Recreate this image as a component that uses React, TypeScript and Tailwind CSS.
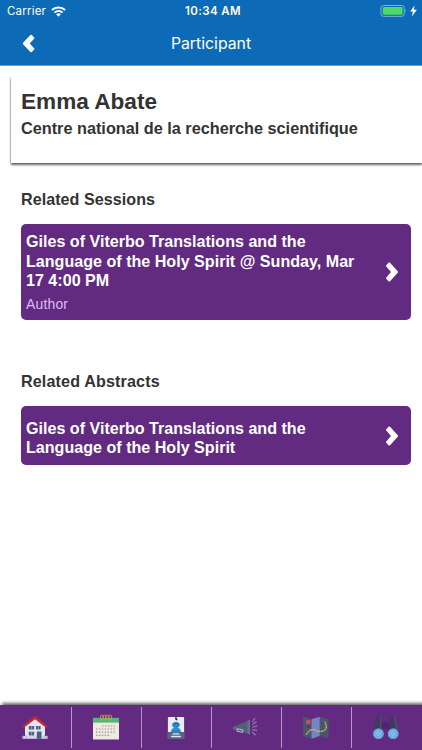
import React from "react";

const HELV = "font-['Liberation_Sans',Arial,sans-serif]";
const UI = "font-['Inter',sans-serif]";

function WifiIcon() {
  return (
    <svg className="ml-[5px] h-[11px] w-[15px]" viewBox="0 0 15 11" fill="none" stroke="#fff">
      <path d="M.9 4.1C4.7.5 10.3.5 14.1 4.1" strokeWidth="2" />
      <path d="M3.4 6.6C5.8 4.4 9.2 4.4 11.6 6.6" strokeWidth="1.9" />
      <path d="M7.5 10.8L5.1 8.3C6.6 7 8.4 7 9.9 8.3Z" fill="#fff" stroke="none" />
    </svg>
  );
}

function BatteryIcon() {
  return (
    <svg className="h-[13px] w-[38px]" viewBox="0 0 38 13">
      <rect x="1" y=".5" width="23.2" height="10.8" rx="2.3" fill="none" stroke="#7fb3dc" />
      <rect x="2.8" y="2.1" width="19.8" height="7.6" rx="1" fill="#4cdb63" />
      <path d="M25.5 4.1q1.6 1.8 0 3.6z" fill="#7fb3dc" />
      <path d="M34.6 .4L30.2 6.6h2.7l-1 4.8 5-6.6h-3z" fill="#fff" />
    </svg>
  );
}

function Chevron({ left = false }: { left?: boolean }) {
  return (
    <svg className="h-[22px] w-[14px] shrink-0" viewBox="0 0 14 22" fill="#fff" stroke="#fff" strokeWidth="2" strokeLinejoin="round">
      <path
        d={
          left
            ? "M2.8 10.5L10.1 2.8L12.4 5.1L7.3 10.5L12.4 15.9L10.1 18.2Z"
            : "M12 11L4.3 2.5L2 4.9L7.4 11L2 17.1L4.3 19.5Z"
        }
      />
    </svg>
  );
}

function HouseIcon() {
  return (
    <svg className="h-7 w-7" viewBox="0 0 28 28">
      <path d="M4 12L14 4l10 8v13H4z" fill="#e6e5ef" />
      <path d="M1.4 23h25.2v2.8H1.4z" fill="#d9d4ea" />
      <path d="M1.2 13.4L14 2.8l12.8 10.6-1.7 1.4L14 6.3 2.9 14.8z" fill="#c5272f" />
      <path d="M7.8 13h5.4v3.4H7.8zM15 13h4.6v3.4H15zM7.8 18.8h5.4v3.7H7.8z" fill="#4c6286" />
      <path d="M15.8 18.5h4.7v7.3h-4.7z" fill="#48607d" />
      <path d="M10.5 13v9.5M17.3 13v3.4" stroke="#bdc6df" strokeWidth=".5" />
      <path d="M2.5 22v3.5M4.8 22v3.5M23.5 22v3.5M25.7 22v3.5" stroke="#9184ba" strokeWidth=".5" />
    </svg>
  );
}

function CalendarIcon() {
  return (
    <svg className="h-7 w-7" viewBox="0 0 28 28">
      <path d="M1 7h26v19.5H1z" fill="#ece9df" />
      <path d="M1 4.8h26v4.8H1z" fill="#56b578" />
      <g fill="none" stroke="#c8a34d" strokeWidth=".9">
        <ellipse cx="9.8" cy="4.4" rx="1.4" ry="2.4" />
        <ellipse cx="12.6" cy="4.4" rx="1.4" ry="2.4" />
        <ellipse cx="15.4" cy="4.4" rx="1.4" ry="2.4" />
        <ellipse cx="18.2" cy="4.4" rx="1.4" ry="2.4" />
      </g>
      <g stroke="#98978f" strokeWidth="1.2" strokeDasharray="1.4 1.5">
        <path d="M10 13h14M4 16h20M4 19.2h20M4 22.4h14" />
      </g>
    </svg>
  );
}

function BadgeIcon() {
  return (
    <svg className="h-7 w-7" viewBox="0 0 28 28">
      <rect x="5.9" y="4" width="16.2" height="22" rx=".8" fill="#e8edf4" />
      <path d="M5.9 19h16.2v7H5.9z" fill="#526480" />
      <path d="M13 4.2h1.8v1.4l1 1.1-1 .9-1.6-1.2z" fill="#34364f" />
      <path d="M9 19.2c0-3 1.7-4 3.4-4.4-3.3-1.2-3-5.6 1.6-5.6s4.9 4.4 1.6 5.6c1.7.4 3.4 1.4 3.4 4.4z" fill="#258fce" />
      <path d="M10.7 10.4c1.5-1.6 5.1-1.6 6.6 0v1.4h-6.6z" fill="#2778b0" />
      <path d="M10.8 20.9h6.4M9 23.7h10" stroke="#e5e7ed" strokeWidth="1.2" />
      <path d="M9 22h10" stroke="#b4bdcb" strokeWidth=".6" />
    </svg>
  );
}

function MegaphoneIcon() {
  return (
    <svg className="h-7 w-7" viewBox="0 0 28 28">
      <path d="M1 14l3-1v4l-3-.7z" fill="#786388" />
      <path d="M3.4 13L17 7.2v14L3.4 17.3z" fill="#506079" />
      <path d="M15.5 7.8L18 7v14.4l-2.5-.6z" fill="#65718d" />
      <path d="M5.2 15.7l6 1.3-.6 2.4-5.7-1.3z" fill="none" stroke="#c2b9d0" strokeWidth="1" />
      <g fill="none" stroke="#a78fbf" strokeWidth="1">
        <path d="M20 8.8l1.5-1.2v-1l2-1M20.3 11.5l1.8-1v-1l2.5-.5M20.5 14h1.8l1-1h2M20.3 16.4l1.8 1 1-.7 2 1M20 18.8l1.7 1.2v1l2.3 1" />
      </g>
    </svg>
  );
}

function MapIcon() {
  return (
    <svg className="h-7 w-7" viewBox="0 0 28 28">
      <path d="M1.2 3.4l8.3 2.8v19.6l-8.3-2.9zM17.7 3.7l8.8 2.2v19.5l-8.8-2.3z" fill="#4a566f" />
      <path d="M9.5 6.2l8.2-2.5v19.4l-8.2 2.7z" fill="#7587c2" />
      <path d="M6.4 13.2v.2" stroke="#263146" strokeWidth="1.8" strokeLinecap="round" />
      <circle cx="6.3" cy="8.9" r="2.3" fill="#c84f58" />
      <path d="M6.3 10.9v1.8" stroke="#b8424d" />
      <path d="M4.2 21.8l1.3-2.2L8 17.4l3-1 3 1.2 3 .8 3-.1 3-1.3 1.3-2.2-.3-3-1-3" fill="none" stroke="#d6bd4c" strokeWidth="1.2" strokeDasharray="2.4 .5" />
    </svg>
  );
}

function BinocularsIcon() {
  return (
    <svg className="h-7 w-7" viewBox="0 0 28 28">
      <path d="M4.2 4.5q2.8-2 5.4 0v7l2 8H1.5zM18.4 4.5q2.8-2 5.4 0l2.7 15H16.4l2-8z" fill="#3e3b5e" />
      <path d="M9.5 9.4h9v6.4h-9z" fill="#4b286b" />
      <path d="M7.8 4.2h1.8v12l-1.8 1zM22 3.8h1.8l2.5 14-2.8-1z" fill="#4e4b6e" />
      <circle cx="6.4" cy="20.7" r="5.3" fill="#73b0e7" />
      <circle cx="21.2" cy="20.7" r="5.3" fill="#73b0e7" />
      <circle cx="6.4" cy="20.7" r="4.9" fill="none" stroke="#5c98cf" strokeWidth=".7" />
      <circle cx="21.2" cy="20.7" r="4.9" fill="none" stroke="#5c98cf" strokeWidth=".7" />
      <path d="M3.8 21l3.2-3M5.7 22.7l3-3M18.5 21l3.2-3M20.4 22.7l3-3" stroke="#a0cdf4" strokeWidth="1" />
    </svg>
  );
}

const tabs = [HouseIcon, CalendarIcon, BadgeIcon, MegaphoneIcon, MapIcon, BinocularsIcon];

export default function App() {
  return (
    <div className={`flex h-[750px] w-[422px] flex-col overflow-hidden bg-white text-[#333] ${HELV}`}>
      <header className={`h-[66px] shrink-0 border-b border-[#66a0d2] bg-[#0c6ab7] text-white ${UI}`}>
        <div className="grid h-[22px] grid-cols-3 items-center">
          <div className="flex items-center pl-[7px] pt-px text-[11.5px] tracking-[0.2px]">
            <span>Carrier</span>
            <WifiIcon />
          </div>
          <div className="whitespace-nowrap pl-[4px] pt-px text-center text-[11.5px] font-semibold tracking-[0.4px]">10:34 AM</div>
          <div className="flex justify-end pr-[4px]">
            <BatteryIcon />
          </div>
        </div>
        <div className="grid h-[43px] grid-cols-[60px_1fr_60px] items-center">
          <button className="pl-[21px]" aria-label="Back">
            <Chevron left />
          </button>
          <h1 className="text-center text-[15.8px] font-normal">Participant</h1>
        </div>
      </header>

      <main className="flex-1">
        <section className="ml-[11px] mt-[11px] h-[86px] pl-[10px] pt-[12px] shadow-[0_2px_2px_rgba(0,0,0,0.6),-1px_0_1px_rgba(0,0,0,0.1)]">
          <h2 className="text-[22.6px] font-bold leading-[26px]">Emma Abate</h2>
          <p className="text-[16.25px] font-bold leading-[26px]">Centre national de la recherche scientifique</p>
        </section>

        <section className="ml-[21px] mr-[11px] mt-[26px]">
          <h3 className="text-[16.1px] font-bold leading-5 tracking-[0.05px]">Related Sessions</h3>
          <div className="mt-[15px] flex h-24 items-center justify-between rounded-[5px] bg-[#622a80] pl-[5px] pr-[12px] text-white">
            <div className="w-[340px] pt-[2px]">
              <p className="text-[16.1px] font-bold leading-[19.5px]">
                Giles of Viterbo Translations and the Language of the Holy Spirit @ Sunday, Mar 17 4:00 PM
              </p>
              <p className="mt-[3px] text-[14px] leading-5 tracking-[0.15px] text-[#dfbdf0]">Author</p>
            </div>
            <Chevron />
          </div>
        </section>

        <section className="ml-[21px] mr-[11px] mt-[51px]">
          <h3 className="text-[16.1px] font-bold leading-5 tracking-[0.15px]">Related Abstracts</h3>
          <div className="mt-[15px] flex h-[59px] items-center justify-between rounded-[5px] bg-[#622a80] pl-[5px] pr-[12px] text-white">
            <p className="w-[340px] pt-[5px] text-[16.1px] font-bold leading-[19.5px]">
              Giles of Viterbo Translations and the Language of the Holy Spirit
            </p>
            <Chevron />
          </div>
        </section>
      </main>

      <nav className="flex h-[45px] shrink-0 bg-[#622a80] pb-[2px] pt-[2px] shadow-[2px_-2px_3px_rgba(0,0,0,0.6)]">
        {tabs.map((Icon, i) => (
          <button
            key={i}
            className={`flex items-center justify-center pb-px ${i < 5 ? "border-r border-[#b994cb] pr-px" : "pr-[2px]"} ${i === 0 ? "w-[72px]" : "w-[70px]"}`}
          >
            <Icon />
          </button>
        ))}
      </nav>
    </div>
  );
}
